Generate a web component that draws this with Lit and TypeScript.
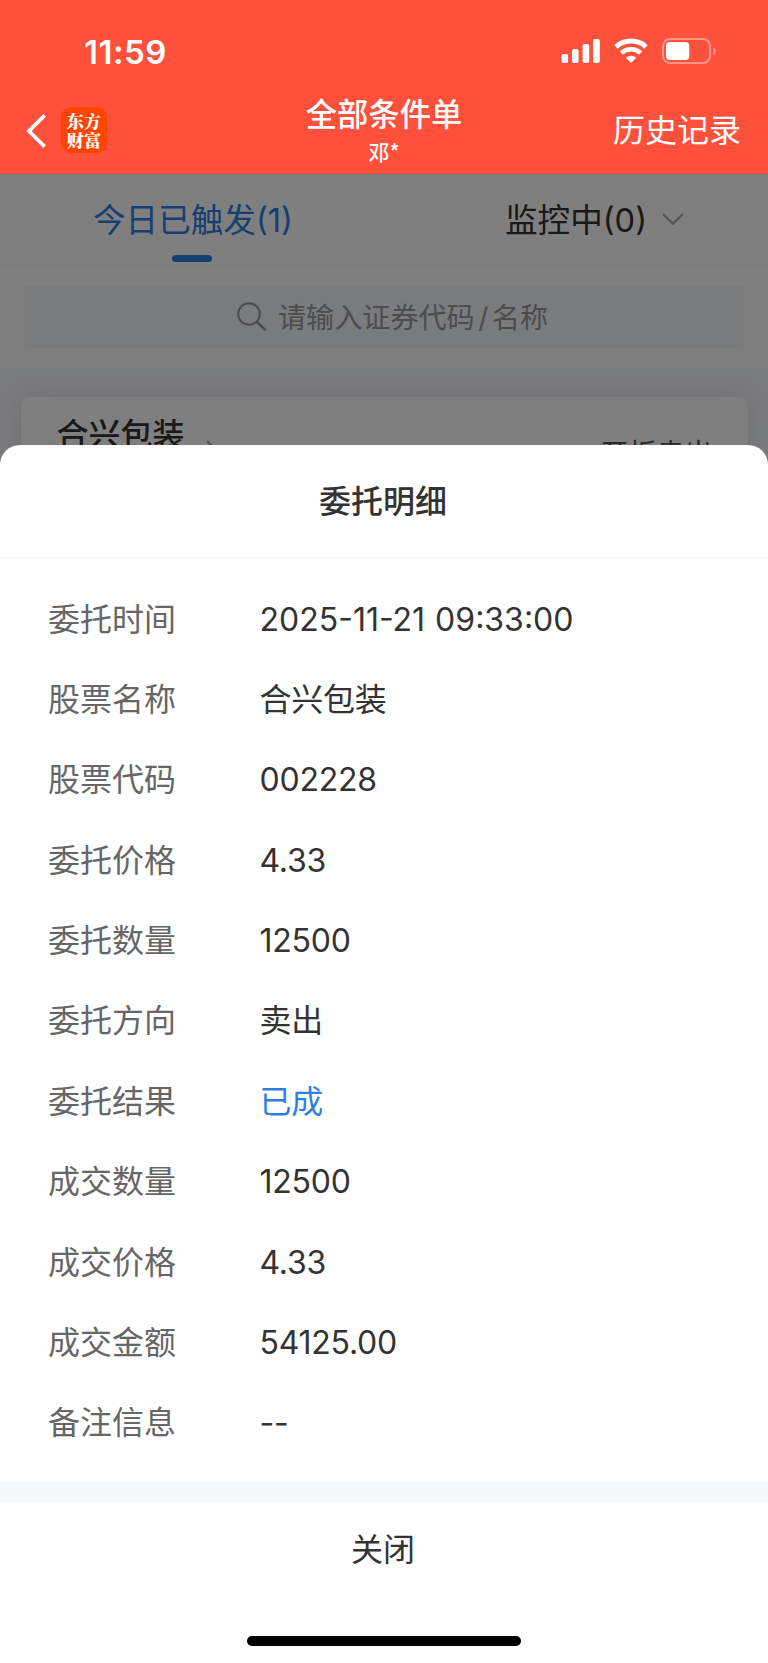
import { LitElement, html, css } from "lit";
import { customElement, property } from "lit/decorators.js";

@customElement("status-bar")
class StatusBar extends LitElement {
  static styles = css`
    :host { display: flex; justify-content: space-between; align-items: center; height: 102px; padding: 0 51px 0 84px; box-sizing: border-box; }
    .time { font: 600 33px/40px Inter, sans-serif; letter-spacing: 0.5px; color: #fff; padding-top: 2px; }
    .icons { display: block; }
  `;
  render() {
    return html`
      <span class="time">11:59</span>
      <svg class="icons" width="156" height="26" viewBox="0 0 156 26" fill="#fff">
        <rect x="0.5" y="16" width="6.6" height="9" rx="2"/>
        <rect x="11" y="11" width="6.6" height="14" rx="2"/>
        <rect x="21.6" y="6" width="6.6" height="19" rx="2"/>
        <rect x="32" y="1" width="6.8" height="24" rx="2"/>
        <g fill="none" stroke="#fff">
          <path d="M55 8.8a22.5 22.5 0 0 1 30 0" stroke-width="5"/>
          <path d="M60.3 15a14.5 14.5 0 0 1 19.4 0" stroke-width="4.6"/>
        </g>
        <path d="M70 25l-5.2-5.2a7.6 7.6 0 0 1 10.4 0z"/>
        <rect x="102" y="1" width="47" height="24" rx="7" fill="none" stroke="#fff" stroke-opacity=".4" stroke-width="2"/>
        <rect x="105" y="4" width="23.3" height="18" rx="4"/>
        <path d="M152.4 9.2c3.2 1.4 3.2 6.6 0 8z" fill-opacity=".45"/>
      </svg>`;
  }
}

@customElement("nav-header")
class NavHeader extends LitElement {
  static styles = css`
    :host { display: grid; grid-template-columns: 1fr auto 1fr; height: 71.5px; color: #fff; }
    .left { display: flex; gap: 15px; padding: 5px 0 0 26px; align-items: flex-start; }
    .back { margin-top: 6px; }
    .logo { width: 46px; height: 46px; box-sizing: border-box; padding-top: 3.5px; border-radius: 10px; background: #ff4500; font: 900 17.2px/19px "Noto Serif CJK SC", "Noto Sans CJK SC", sans-serif; text-align: center; }
    .logo span { display: block; }
    .mid { text-align: center; }
    .title { font: 500 31.3px/36px "Noto Sans CJK SC", sans-serif; margin-top: -7px; }
    .sub { font: 500 21px/28px "Noto Sans CJK SC", sans-serif; margin-top: 5.5px; }
    .right { font: 400 32px/40px "Noto Sans CJK SC", sans-serif; text-align: right; padding: 6px 27px 0 0; }
  `;
  render() {
    return html`
      <div class="left">
        <svg class="back" width="20" height="36" viewBox="0 0 20 36" fill="none" stroke="#fff" stroke-width="3.8"><path d="M18.6 2.4L3 18l15.6 15.6"/></svg>
        <div class="logo"><span>东方</span><span>财富</span></div>
      </div>
      <div class="mid"><div class="title">全部条件单</div><div class="sub">邓*</div></div>
      <div class="right">历史记录</div>`;
  }
}

@customElement("order-page")
class OrderPage extends LitElement {
  static styles = css`
    :host { display: block; background: #f5f6fa; color: #333; font-family: Inter, "Noto Sans CJK SC", sans-serif; }
    .tabs { display: grid; grid-template-columns: 1fr 1fr; height: 92px; box-sizing: border-box; background: #fff; border-bottom: 1px solid #f2f2f2; }
    .tab { display: flex; flex-direction: column; align-items: center; font-size: 32.6px; line-height: 46px; padding-top: 23.5px; }
    .on { color: #2d7fe3; }
    .on span { padding-left: 2px; }
    .line { width: 40.5px; height: 6.5px; border-radius: 3.5px; background: #2d7fe3; margin-top: 12px; }
    .row { display: flex; align-items: center; gap: 14px; padding-left: 38px; }
    .row svg { margin-top: -2px; }
    .searchwrap { background: #fff; padding: 20.5px 24px; height: 61.5px; }
    .search { height: 61.5px; border-radius: 5px; background: #f5f6fa; display: flex; align-items: center; justify-content: center; gap: 11px; font-size: 28.1px; color: #999; padding-left: 17px; box-sizing: border-box; }
    .hint { margin-top: -3px; }
    .slash { padding: 0 3.5px; }
    .card { margin: 28.5px 20.5px 0; height: 300px; border-radius: 9px; background: #fff; box-shadow: 0 0 22px rgba(90, 100, 120, .15); display: flex; justify-content: space-between; padding: 13px 35px 0 36px; box-sizing: border-box; }
    .name { font: 500 32px/44px "Noto Sans CJK SC", sans-serif; display: flex; gap: 20px; align-items: flex-start; }
    .chev { margin-top: 29px; }
    .type { font-size: 28px; line-height: 40px; color: #555; padding-top: 24.5px; }
  `;
  render() {
    return html`
      <div class="tabs">
        <div class="tab on"><span>今日已触发(1)</span><div class="line"></div></div>
        <div class="tab"><div class="row"><span>监控中(0)</span>
          <svg width="24" height="14" viewBox="0 0 24 14" fill="none" stroke="#aaa" stroke-width="2.4"><path d="M2 2l10 9.5L22 2"/></svg></div></div>
      </div>
      <div class="searchwrap"><div class="search">
        <svg width="30" height="30" viewBox="0 0 30 30" fill="none" stroke="#999" stroke-width="2"><circle cx="12" cy="12" r="10.8"/><path d="M19.5 19.5l9 8.7" stroke-width="2.6"/></svg>
        <span class="hint">请输入证券代码<span class="slash">/</span>名称</span></div></div>
      <div class="card">
        <div class="name">合兴包装
          <svg class="chev" width="14" height="24" viewBox="0 0 14 24" fill="none" stroke="#aaa" stroke-width="2.4"><path d="M2 2l10 10L2 22"/></svg></div>
        <div class="type">开板卖出</div>
      </div>`;
  }
}

@customElement("detail-sheet")
class DetailSheet extends LitElement {
  @property({ attribute: false }) rows: [string, string, string?][] = [];
  static styles = css`
    :host { display: flex; flex-direction: column; background: #fff; border-radius: 20px 20px 0 0; color: #333; font: 400 32px/44px Inter, "Noto Sans CJK SC", sans-serif; overflow: hidden; }
    .head { height: 113px; box-sizing: border-box; border-bottom: 1px solid #f2f2f2; font: 500 32px/44px "Noto Sans CJK SC", sans-serif; text-align: center; padding: 32.5px 2px 0 0; }
    .list { margin: 0; padding: 22px 48px 0; height: 924.5px; box-sizing: border-box; }
    .row { display: grid; grid-template-columns: 211.5px 1fr; height: 80.36px; align-items: center; }
    .key { color: #666; }
    .val { margin: 0; letter-spacing: -0.25px; }
    .date { letter-spacing: 0; word-spacing: 1px; }
    .done { color: #2d7fe3; }
    .band { height: 20px; background: #f6f7fa; }
    .close { text-align: center; padding: 26px 2px 0 0; flex: 1; }
    .home { width: 274px; height: 10px; border-radius: 5px; background: #000; margin: 0 auto 17px; }
  `;
  render() {
    return html`
      <div class="head">委托明细</div>
      <dl class="list">${this.rows.map(([k, v, c]) => html`<div class="row"><dt class="key">${k}</dt><dd class="val ${c ?? ""}">${v}</dd></div>`)}</dl>
      <div class="band"></div>
      <div class="close">关闭</div>
      <div class="home"></div>`;
  }
}

@customElement("app-root")
class AppRoot extends LitElement {
  static styles = css`
    :host { display: flex; flex-direction: column; width: 768px; height: 1663px; overflow: hidden; }
    .top { background: #ff503b; height: 173.5px; }
    .stack { flex: 1; display: grid; grid-template-rows: 1489.5px; overflow: hidden; }
    .stack > * { grid-area: 1 / 1; }
    .mask { background: rgba(0, 0, 0, .5); z-index: 1; padding-top: 271px; box-sizing: border-box; display: grid; }
  `;
  rows = [
    ["委托时间", "2025-11-21 09:33:00", "date"], ["股票名称", "合兴包装"], ["股票代码", "002228"],
    ["委托价格", "4.33"], ["委托数量", "12500"], ["委托方向", "卖出"], ["委托结果", "已成", "done"],
    ["成交数量", "12500"], ["成交价格", "4.33"], ["成交金额", "54125.00"], ["备注信息", "--"],
  ];
  render() {
    return html`
      <div class="top"><status-bar></status-bar><nav-header></nav-header></div>
      <div class="stack">
        <order-page></order-page>
        <div class="mask"><detail-sheet .rows=${this.rows}></detail-sheet></div>
      </div>`;
  }
}
